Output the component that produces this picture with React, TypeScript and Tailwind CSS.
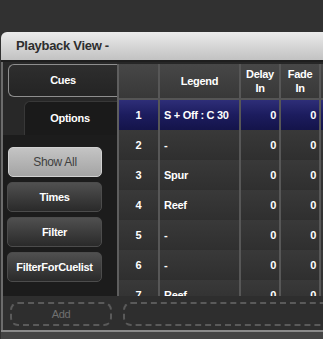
import React from 'react';

const rows = [
  { n: '1', legend: 'S + Off : C 30', delay: '0', fade: '0' },
  { n: '2', legend: '-', delay: '0', fade: '0' },
  { n: '3', legend: 'Spur', delay: '0', fade: '0' },
  { n: '4', legend: 'Reef', delay: '0', fade: '0' },
  { n: '5', legend: '-', delay: '0', fade: '0' },
  { n: '6', legend: '-', delay: '0', fade: '0' },
  { n: '7', legend: 'Reef', delay: '0', fade: '0' },
];

const SideButton: React.FC<{ label: string; active?: boolean }> = ({ label, active }) => (
  <div
    className={
      active
        ? 'h-[30px] w-[94px] rounded-[5px] border border-[#d0d0d0] bg-gradient-to-b from-[#c4c4c4] to-[#a4a4a4] flex items-center justify-center text-[12px] text-[#404040]'
        : 'h-[30px] w-[95px] rounded-[5px] border border-[#4c4c4c] bg-gradient-to-b from-[#505050] to-[#2a2a2a] flex items-center justify-center text-[11px] font-bold text-white'
    }
  >
    {label}
  </div>
);

export default function App() {
  return (
    <div
      className="w-[323px] h-[339px] overflow-hidden bg-[#313131] flex flex-col tracking-[-0.3px]"
      style={{ fontFamily: '"Liberation Sans", Arial, sans-serif' }}
    >
      <div className="h-[32px] shrink-0" />
      <div className="flex-1 flex flex-col ml-[1px] rounded-tl-[6px] overflow-hidden">
        {/* title */}
        <div className="h-[30px] shrink-0 bg-gradient-to-b from-[#ebebeb] to-[#c2c2c2] border-b-2 border-[#1e1e1e] flex items-center pl-[15px] text-[13px] font-bold text-[#2e2e2e]">
          Playback View -
        </div>
        <div className="flex-1 flex flex-col bg-[#2e2e2e] border-l-2 border-[#6c6c6c]">
          <div className="h-[234px] shrink-0 flex overflow-hidden">
            {/* left column */}
            <div className="w-[114px] shrink-0 flex flex-col bg-[#282828] pt-[2px]">
              <div className="h-[33px] ml-[5px] rounded-l-[6px] border border-r-0 border-[#8e8e8e] bg-gradient-to-b from-[#2e2e2e] to-[#242424] flex items-center justify-center text-[11px] font-bold text-white">
                Cues
              </div>
              <div className="h-[4px]" />
              <div className="h-[34px] ml-[21px] rounded-tl-[6px] border-t border-l border-[#383838] bg-[#1a1a1a] flex items-center justify-center pr-[2px] text-[11px] font-bold text-white">
                Options
              </div>
              <div className="flex-1 bg-[#1c1c1c] flex flex-col gap-[5px] pt-[12px] pl-[4px]">
                <div className="pl-[1px]">
                  <SideButton label="Show All" active />
                </div>
                <SideButton label="Times" />
                <SideButton label="Filter" />
                <SideButton label="FilterForCuelist" />
              </div>
            </div>
            {/* table */}
            <div className="flex-1 flex flex-col overflow-hidden bg-[#262626] pt-[2px]">
              <div className="flex-1 border-l-2 border-[#5e5e5e] flex flex-col overflow-hidden">
                <div className="h-[36px] shrink-0 grid grid-cols-[41px_81px_40px_40px_40px] bg-gradient-to-b from-[#474747] to-[#383838] border-b-2 border-[#555] text-white text-[11px] font-bold leading-[14px]">
                  <div className="border-r-2 border-[#575757]" />
                  <div className="border-r-2 border-[#575757] flex items-center justify-center">Legend</div>
                  <div className="border-r-2 border-[#575757] flex flex-col items-center justify-center">
                    <span>Delay</span>
                    <span>In</span>
                  </div>
                  <div className="border-r-2 border-[#575757] flex flex-col items-center justify-center">
                    <span>Fade</span>
                    <span>In</span>
                  </div>
                  <div />
                </div>
                {rows.map((r, i) => (
                  <div
                    key={r.n}
                    className={
                      i === 0
                        ? 'h-[30px] shrink-0 grid grid-cols-[41px_81px_40px_40px_40px] bg-gradient-to-b from-[#2e2e78] via-[#1c1c5e] to-[#14144a] text-white text-[11px] font-bold'
                        : 'h-[30px] shrink-0 grid grid-cols-[41px_81px_40px_40px_40px] bg-gradient-to-b from-[#393939] to-[#2f2f2f] text-white text-[11px] font-bold'
                    }
                  >
                    <div className="border-r-2 border-[#575757] flex items-center justify-center">{r.n}</div>
                    <div className="border-r-2 border-[#575757] flex items-center pl-[4px]">{r.legend}</div>
                    <div className="border-r-2 border-[#575757] flex items-center justify-end pr-[3px]">{r.delay}</div>
                    <div className="border-r-2 border-[#575757] flex items-center justify-end pr-[3px]">{r.fade}</div>
                    <div />
                  </div>
                ))}
              </div>
            </div>
          </div>
          {/* bottom bar */}
          <div className="h-[34px] shrink-0 flex items-center gap-[11px] pl-[7px] pt-[2px]">
            <div className="w-[102px] h-[24px] rounded-[8px] border-2 border-dashed border-[#5a5a5a] flex items-center justify-center text-[11px] text-[#707070]">
              Add
            </div>
            <div className="flex-1 h-[24px] -mr-[10px] rounded-[8px] border-2 border-dashed border-[#5a5a5a]" />
          </div>
        </div>
        <div className="h-[2px] shrink-0 bg-[#8a8a8a]" />
        <div className="flex-1 bg-[#444]" />
      </div>
    </div>
  );
}
